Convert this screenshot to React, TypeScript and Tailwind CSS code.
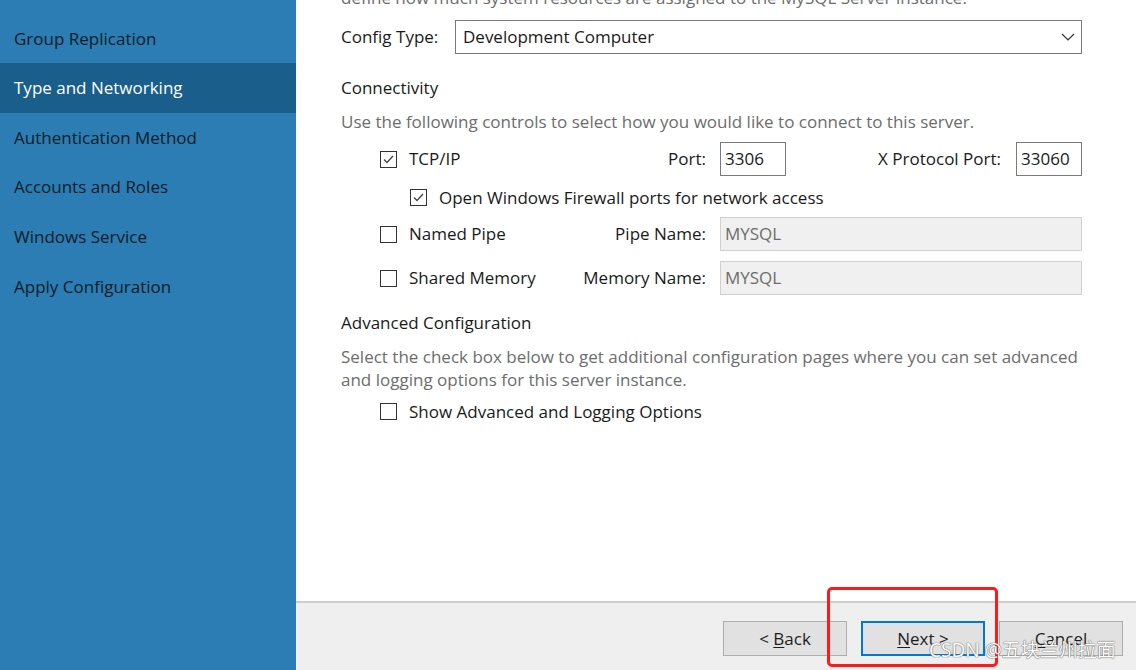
import React from 'react';

const STEPS = [
  'Group Replication',
  'Type and Networking',
  'Authentication Method',
  'Accounts and Roles',
  'Windows Service',
  'Apply Configuration',
];

function Box({ checked }: { checked?: boolean }) {
  return (
    <span className="flex h-[17px] w-[17px] shrink-0 items-center justify-center border border-[#333333] bg-white">
      {checked && (
        <svg width="13" height="13" viewBox="0 0 13 13" fill="none">
          <path d="M2 6.5 L5 9.5 L11 3" stroke="#444" strokeWidth="1.3" />
        </svg>
      )}
    </span>
  );
}

function Btn({ pre, u, post, primary }: { pre?: string; u: string; post?: string; primary?: boolean }) {
  return (
    <div
      className={`flex h-[35px] w-[124px] items-center justify-center whitespace-pre bg-[#e1e1e1] text-[17px] text-[#1e1e1e] ${
        primary ? 'border-2 border-[#0078d7]' : 'border border-[#adadad]'
      }`}
    >
      <span>
        {pre}
        <span className="underline underline-offset-2">{u}</span>
        {post}
      </span>
    </div>
  );
}

export default function App() {
  return (
    <div className="relative flex h-[670px] w-[1136px] overflow-hidden bg-white font-['Open_Sans',sans-serif] text-[#1a1a1a]">
      {/* Sidebar */}
      <div className="w-[296px] shrink-0 bg-[#2b7db3] pt-[13.5px]">
        {STEPS.map((s, i) => (
          <div
            key={s}
            className={`flex h-[49.6px] items-center pl-[14px] text-[17px] ${
              i === 1 ? 'bg-[#1a5f8c] text-white' : 'text-[#0e1c28]'
            }`}
          >
            {s}
          </div>
        ))}
      </div>

      {/* Main */}
      <div className="flex flex-1 flex-col">
        <div className="h-[601px] overflow-hidden pl-[45px] pr-[54px] text-[17px]">
          <p className="mt-[-14px] leading-[23px] text-[#6d6d6d]">
            define how much system resources are assigned to the MySQL Server instance.
          </p>

          <div className="mt-[11px] flex items-center">
            <span className="w-[114px]">Config Type:</span>
            <div className="flex h-[34px] flex-1 items-center justify-between border border-[#7a7a7a] pl-[7px] pr-[6px]">
              <span>Development Computer</span>
              <svg width="14" height="8" viewBox="0 0 14 8" fill="none">
                <path d="M1 1 L7 7 L13 1" stroke="#333" strokeWidth="1.2" />
              </svg>
            </div>
          </div>

          <div className="mt-[22px] leading-[23px]">Connectivity</div>
          <div className="mt-[11px] leading-[23px] text-[#6d6d6d]">
            Use the following controls to select how you would like to connect to this server.
          </div>

          <div className="mt-[9px] flex h-[34px] items-center pl-[39px]">
            <div className="flex w-[180px] items-center gap-[12px]">
              <Box checked />
              <span>TCP/IP</span>
            </div>
            <span className="w-[146px] text-right">Port:</span>
            <div className="ml-[14px] flex h-[34px] w-[66px] items-center border border-[#7a7a7a] pl-[4px]">3306</div>
            <span className="w-[215px] text-right">X Protocol Port:</span>
            <div className="ml-[15px] flex h-[34px] w-[66px] items-center border border-[#7a7a7a] pl-[4px]">33060</div>
          </div>

          <div className="mt-[10px] flex h-[23px] items-center gap-[12px] pl-[69px]">
            <Box checked />
            <span>Open Windows Firewall ports for network access</span>
          </div>

          <div className="mt-[8px] flex h-[34px] items-center pl-[39px]">
            <div className="flex w-[180px] items-center gap-[12px]">
              <Box />
              <span>Named Pipe</span>
            </div>
            <span className="w-[146px] text-right">Pipe Name:</span>
            <div className="ml-[14px] flex h-[34px] flex-1 items-center border border-[#d0d0d0] bg-[#f0f0f0] pl-[4px] text-[#6d6d6d]">
              MYSQL
            </div>
          </div>

          <div className="mt-[10px] flex h-[34px] items-center pl-[39px]">
            <div className="flex w-[180px] items-center gap-[12px]">
              <Box />
              <span>Shared Memory</span>
            </div>
            <span className="w-[146px] text-right">Memory Name:</span>
            <div className="ml-[14px] flex h-[34px] flex-1 items-center border border-[#d0d0d0] bg-[#f0f0f0] pl-[4px] text-[#6d6d6d]">
              MYSQL
            </div>
          </div>

          <div className="mt-[16px] leading-[23px]">Advanced Configuration</div>
          <p className="mt-[11px] leading-[23px] text-[#6d6d6d]">
            Select the check box below to get additional configuration pages where you can set advanced and logging options for this server instance.
          </p>
          <div className="mt-[9px] flex h-[23px] items-center gap-[12px] pl-[39px]">
            <Box />
            <span>Show Advanced and Logging Options</span>
          </div>
        </div>

        {/* Footer */}
        <div className="flex flex-1 justify-end gap-[14px] border-t-2 border-[#cdcdcd] bg-[#efefef] pr-[13px] pt-[18px]">
          <Btn pre="< " u="B" post="ack" />
          <Btn u="N" post="ext >" primary />
          <Btn u="C" post="ancel" />
        </div>
      </div>

      {/* annotation */}
      <div className="absolute left-[827px] top-[587px] h-[80px] w-[171px] rounded-[5px] border-[3px] border-[#ff1a1a]" />
      <div className="absolute left-[929px] top-[638px] text-[19px] leading-[24px] text-white [text-shadow:0_0_1px_#555,0_0_1px_#555] font-['Noto_Sans','Noto_Sans_CJK_SC',sans-serif]">
        CSDN @五块兰州拉面
      </div>
    </div>
  );
}
